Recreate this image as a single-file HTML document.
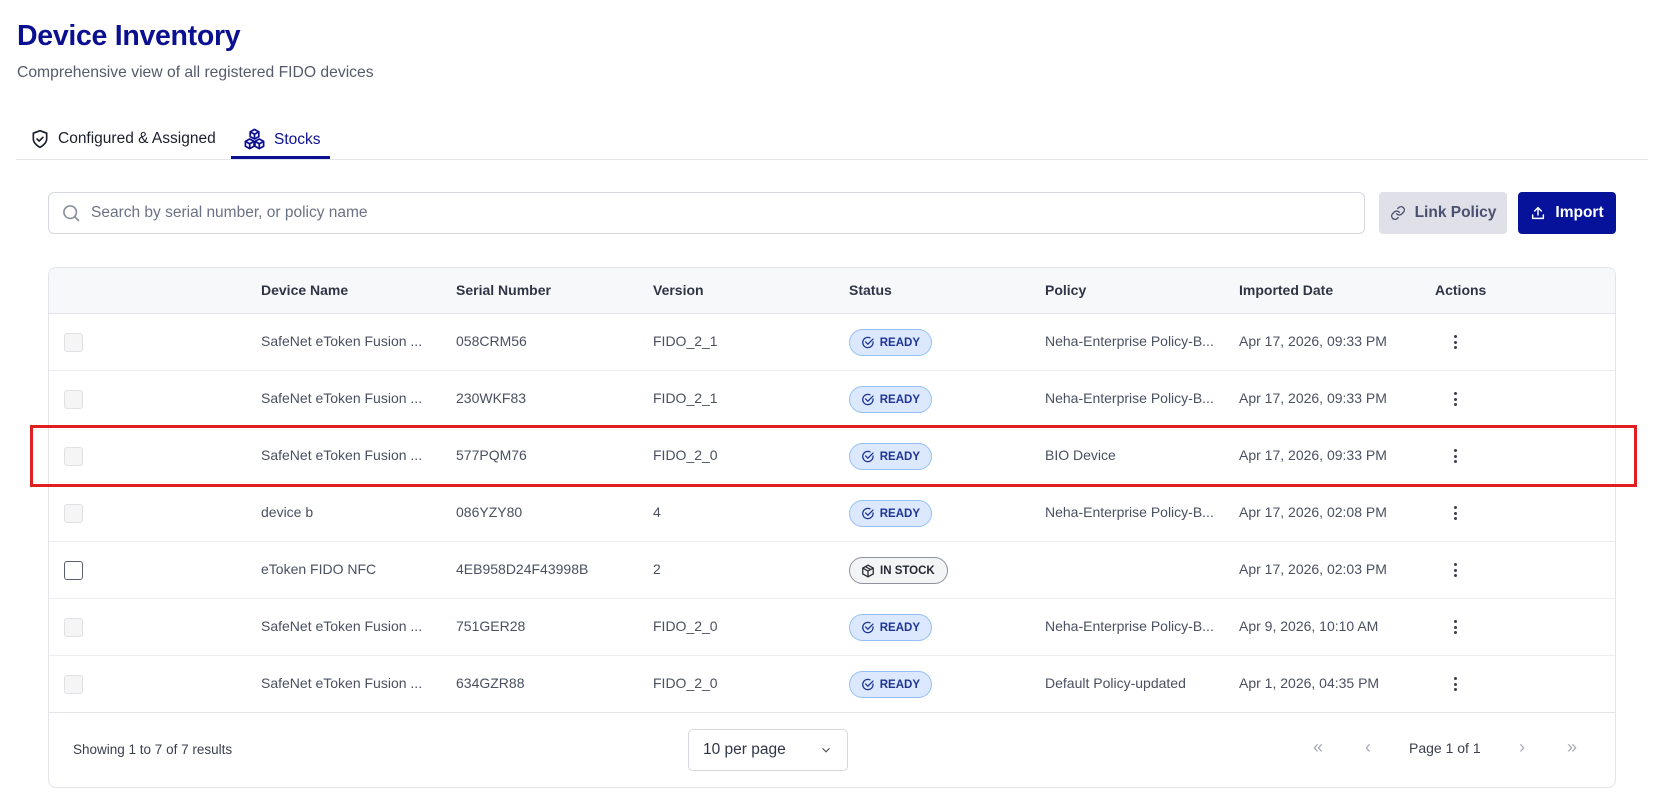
<!DOCTYPE html>
<html><head><meta charset="utf-8"><style>
*{box-sizing:border-box;margin:0;padding:0}
body{width:1671px;height:809px;background:#fff;font-family:"Liberation Sans",Arial,sans-serif;color:#3f4556;position:relative;overflow:hidden}
.abs{position:absolute}
h1{position:absolute;left:17px;top:20px;font-size:28.5px;font-weight:700;color:#0b1090;letter-spacing:-0.3px}
.sub{left:17px;top:64px;font-size:15.7px;color:#555b6b}
.tab{top:128px;font-size:15.5px;color:#1b1f2b;display:flex;align-items:center;gap:8px}
.search{left:48px;top:192px;width:1317px;height:42px;border:1px solid #d5d8de;border-radius:6px;display:flex;align-items:center;padding-left:12px;gap:10px;font-size:15.5px;color:#6b7284}
.btn{top:192px;height:42px;border-radius:4px;display:flex;align-items:center;justify-content:center;gap:9px;font-weight:700;font-size:15.5px}
.tbl{left:48px;top:267px;width:1568px;height:521px;border:1px solid #e3e5ea;border-radius:8px;overflow:hidden}
.hdr{position:absolute;left:0;top:0;width:100%;height:46px;background:#f7f8fa;border-bottom:1px solid #e3e5ea}
.th{position:absolute;top:14px;font-size:14px;font-weight:700;color:#2f3545}
.row{position:absolute;left:0;width:100%;height:57px;border-bottom:1px solid #eceef1}
.td{position:absolute;top:19px;font-size:14px;color:#4a5060;white-space:nowrap}
.cb{position:absolute;left:15px;top:19px;width:19px;height:19px;border:1px solid #dfe1e5;border-radius:3px;background:#f5f5f6}
.cb.on{border:1.5px solid #5a5f6b;background:#fff}
.badge{position:absolute;left:800px;top:15px;height:27px;border-radius:14px;display:flex;align-items:center;padding:0 11px 0 11px;gap:5px;font-size:11.5px;font-weight:700}
.ready{background:#dbe8fd;border:1px solid #94c0f6;color:#1f3592;width:83px}
.stock{background:#f3f4f6;border:1px solid #8d929b;color:#262a33;width:99px}
.kebab{position:absolute;left:1405px;top:21px;width:3px}
.kebab i{display:block;width:3px;height:3px;border-radius:50%;background:#3a3f4c;margin-bottom:2.5px}
</style></head><body>
<h1>Device Inventory</h1>
<div class="abs sub">Comprehensive view of all registered FIDO devices</div>

<div class="abs tab" style="left:30px">
<svg width="20" height="22" viewBox="0 0 24 24" fill="none" stroke="#1b1f2b" stroke-width="2" stroke-linecap="round" stroke-linejoin="round"><path d="M12 22s8-4 8-10V5l-8-3-8 3v7c0 6 8 10 8 10z"/><path d="M8.5 12l2.5 2.5 4.5-4.5"/></svg>
<span>Configured &amp; Assigned</span></div>
<div class="abs tab" style="left:243px;color:#0b1090">
<svg width="23" height="23" viewBox="0 0 24 24" fill="none" stroke="#0b1090" stroke-width="1.8" stroke-linejoin="round"><path d="M12 1.5l4.5 2.5v5L12 11.5 7.5 9V4z"/><path d="M7.5 4L12 6.5 16.5 4M12 6.5v5"/><path d="M7 11.5l4.5 2.5v5L7 21.5 2.5 19v-5z"/><path d="M2.5 14L7 16.5 11.5 14M7 16.5v5"/><path d="M17 11.5l4.5 2.5v5L17 21.5 12.5 19v-5z"/><path d="M12.5 14L17 16.5 21.5 14M17 16.5v5"/></svg>
<span>Stocks</span></div>
<div class="abs" style="left:16px;top:159px;width:1632px;height:1px;background:#e3e5ea"></div>
<div class="abs" style="left:231px;top:156px;width:99px;height:3px;background:#0b1090"></div>

<div class="abs search">
<svg width="20" height="20" viewBox="0 0 24 24" fill="none" stroke="#8a909c" stroke-width="2" stroke-linecap="round"><circle cx="11" cy="11" r="7.5"/><path d="M16.5 16.5L21 21"/></svg>
<span>Search by serial number, or policy name</span></div>
<div class="abs btn" style="left:1379px;width:128px;background:#dfe0e8;color:#4a5070">
<svg width="16" height="16" viewBox="0 0 24 24" fill="none" stroke="#4a5070" stroke-width="2" stroke-linecap="round"><path d="M10 13a5 5 0 0 0 7.5.5l3-3a5 5 0 0 0-7-7l-1.7 1.7"/><path d="M14 11a5 5 0 0 0-7.5-.5l-3 3a5 5 0 0 0 7 7l1.7-1.7"/></svg>Link Policy</div>
<div class="abs btn" style="left:1518px;width:98px;background:#051299;color:#fff">
<svg width="16" height="16" viewBox="0 0 24 24" fill="none" stroke="#fff" stroke-width="2.2" stroke-linecap="round" stroke-linejoin="round"><path d="M12 15V4M7 9l5-5 5 5"/><path d="M4 15v5h16v-5"/></svg>Import</div>

<div class="abs tbl">
<div class="hdr">
<div class="th" style="left:212px">Device Name</div>
<div class="th" style="left:407px">Serial Number</div>
<div class="th" style="left:604px">Version</div>
<div class="th" style="left:800px">Status</div>
<div class="th" style="left:996px">Policy</div>
<div class="th" style="left:1190px">Imported Date</div>
<div class="th" style="left:1386px">Actions</div>
</div>

<div class="row" style="top:46px"><div class="cb"></div><div class="td" style="left:212px">SafeNet eToken Fusion ...</div><div class="td" style="left:407px">058CRM56</div><div class="td" style="left:604px">FIDO_2_1</div><div class="badge ready"><svg width="15" height="15" viewBox="0 0 24 24" fill="none" stroke="#1f3592" stroke-width="2.2" stroke-linecap="round"><path d="M21 11v1a9 9 0 1 1-5.3-8.2"/><path d="M8 11l4 4 9-9"/></svg>READY</div><div class="td" style="left:996px">Neha-Enterprise Policy-B...</div><div class="td" style="left:1190px">Apr 17, 2026, 09:33 PM</div><div class="kebab"><i></i><i></i><i></i></div></div>

<div class="row" style="top:103px"><div class="cb"></div><div class="td" style="left:212px">SafeNet eToken Fusion ...</div><div class="td" style="left:407px">230WKF83</div><div class="td" style="left:604px">FIDO_2_1</div><div class="badge ready"><svg width="15" height="15" viewBox="0 0 24 24" fill="none" stroke="#1f3592" stroke-width="2.2" stroke-linecap="round"><path d="M21 11v1a9 9 0 1 1-5.3-8.2"/><path d="M8 11l4 4 9-9"/></svg>READY</div><div class="td" style="left:996px">Neha-Enterprise Policy-B...</div><div class="td" style="left:1190px">Apr 17, 2026, 09:33 PM</div><div class="kebab"><i></i><i></i><i></i></div></div>

<div class="row" style="top:160px"><div class="cb"></div><div class="td" style="left:212px">SafeNet eToken Fusion ...</div><div class="td" style="left:407px">577PQM76</div><div class="td" style="left:604px">FIDO_2_0</div><div class="badge ready"><svg width="15" height="15" viewBox="0 0 24 24" fill="none" stroke="#1f3592" stroke-width="2.2" stroke-linecap="round"><path d="M21 11v1a9 9 0 1 1-5.3-8.2"/><path d="M8 11l4 4 9-9"/></svg>READY</div><div class="td" style="left:996px">BIO Device</div><div class="td" style="left:1190px">Apr 17, 2026, 09:33 PM</div><div class="kebab"><i></i><i></i><i></i></div></div>

<div class="row" style="top:217px"><div class="cb"></div><div class="td" style="left:212px">device b</div><div class="td" style="left:407px">086YZY80</div><div class="td" style="left:604px">4</div><div class="badge ready"><svg width="15" height="15" viewBox="0 0 24 24" fill="none" stroke="#1f3592" stroke-width="2.2" stroke-linecap="round"><path d="M21 11v1a9 9 0 1 1-5.3-8.2"/><path d="M8 11l4 4 9-9"/></svg>READY</div><div class="td" style="left:996px">Neha-Enterprise Policy-B...</div><div class="td" style="left:1190px">Apr 17, 2026, 02:08 PM</div><div class="kebab"><i></i><i></i><i></i></div></div>

<div class="row" style="top:274px"><div class="cb on"></div><div class="td" style="left:212px">eToken FIDO NFC</div><div class="td" style="left:407px">4EB958D24F43998B</div><div class="td" style="left:604px">2</div><div class="badge stock"><svg width="14" height="14" viewBox="0 0 24 24" fill="none" stroke="#262a33" stroke-width="2.2" stroke-linejoin="round"><path d="M12 2l9 5v10l-9 5-9-5V7z"/><path d="M3 7l9 5 9-5M12 12v10M7.5 4.5l9 5"/></svg>IN STOCK</div><div class="td" style="left:1190px">Apr 17, 2026, 02:03 PM</div><div class="kebab"><i></i><i></i><i></i></div></div>

<div class="row" style="top:331px"><div class="cb"></div><div class="td" style="left:212px">SafeNet eToken Fusion ...</div><div class="td" style="left:407px">751GER28</div><div class="td" style="left:604px">FIDO_2_0</div><div class="badge ready"><svg width="15" height="15" viewBox="0 0 24 24" fill="none" stroke="#1f3592" stroke-width="2.2" stroke-linecap="round"><path d="M21 11v1a9 9 0 1 1-5.3-8.2"/><path d="M8 11l4 4 9-9"/></svg>READY</div><div class="td" style="left:996px">Neha-Enterprise Policy-B...</div><div class="td" style="left:1190px">Apr 9, 2026, 10:10 AM</div><div class="kebab"><i></i><i></i><i></i></div></div>

<div class="row" style="top:388px;border-bottom:1px solid #e3e5ea"><div class="cb"></div><div class="td" style="left:212px">SafeNet eToken Fusion ...</div><div class="td" style="left:407px">634GZR88</div><div class="td" style="left:604px">FIDO_2_0</div><div class="badge ready"><svg width="15" height="15" viewBox="0 0 24 24" fill="none" stroke="#1f3592" stroke-width="2.2" stroke-linecap="round"><path d="M21 11v1a9 9 0 1 1-5.3-8.2"/><path d="M8 11l4 4 9-9"/></svg>READY</div><div class="td" style="left:996px">Default Policy-updated</div><div class="td" style="left:1190px">Apr 1, 2026, 04:35 PM</div><div class="kebab"><i></i><i></i><i></i></div></div>

<div class="td" style="left:24px;top:474px;font-size:13.5px;color:#3a3f4c">Showing 1 to 7 of 7 results</div>
<div style="position:absolute;left:639px;top:461px;width:160px;height:42px;border:1px solid #d5d8de;border-radius:5px;display:flex;align-items:center;justify-content:space-between;padding:0 14px;font-size:15.5px;color:#2f3545">10 per page<svg width="14" height="14" viewBox="0 0 24 24" fill="none" stroke="#555" stroke-width="2"><path d="M6 9l6 6 6-6"/></svg></div>
<div class="td" style="left:1264px;top:469px;font-size:18px;color:#a8acb5">«</div>
<div class="td" style="left:1316px;top:469px;font-size:18px;color:#a8acb5">‹</div>
<div class="td" style="left:1360px;top:472px;font-size:14px;color:#3a3f4c">Page 1 of 1</div>
<div class="td" style="left:1470px;top:469px;font-size:18px;color:#a8acb5">›</div>
<div class="td" style="left:1518px;top:469px;font-size:18px;color:#a8acb5">»</div>
</div>

<div class="abs" style="left:30px;top:425px;width:1607px;height:62px;border:3px solid #e02020"></div>
</body></html>
